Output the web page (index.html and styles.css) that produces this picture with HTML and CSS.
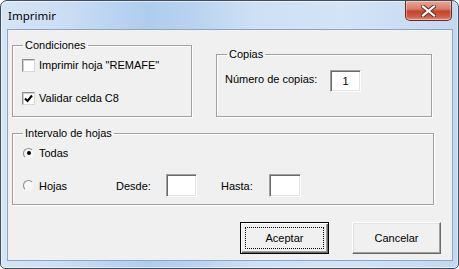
FILE: index.html
```html
<!DOCTYPE html>
<html lang="es">
<head>
<meta charset="utf-8">
<title>Imprimir</title>
<link rel="stylesheet" href="styles.css">
</head>
<body>
<div class="window">
  <div class="titlebar">
    <span class="title">Imprimir</span>
    <span class="close" aria-label="Cerrar">
      <svg width="15" height="12" viewBox="0 0 15 12">
        <path d="M2 1.5 L13 10.5 M13 1.5 L2 10.5" stroke="#5a2a24" stroke-width="4" stroke-linecap="square"/>
        <path d="M2 1.5 L13 10.5 M13 1.5 L2 10.5" stroke="#ffffff" stroke-width="2.2" stroke-linecap="square"/>
      </svg>
    </span>
  </div>
  <div class="client">
    <div class="top-row">
      <fieldset class="group cond">
        <legend>Condiciones</legend>
        <label class="check first"><span class="box"></span>Imprimir hoja "REMAFE"</label>
        <label class="check second"><span class="box"><svg width="9" height="9" viewBox="0 0 9 9"><path d="M1 4.5 L3.5 7 L8 1.5" fill="none" stroke="#000" stroke-width="2"/></svg></span>Validar celda C8</label>
      </fieldset>
      <fieldset class="group copias">
        <legend>Copias</legend>
        <div class="copies-row">
          <span class="copies-label">Número de copias:</span>
          <span class="textbox num">1</span>
        </div>
      </fieldset>
    </div>
    <fieldset class="group intervalo">
      <legend>Intervalo de hojas</legend>
      <label class="radio first"><span class="dot checked"></span>Todas</label>
      <div class="range-row">
        <label class="radio hojas"><span class="dot"></span>Hojas</label>
        <span class="range-label desde">Desde:</span>
        <span class="textbox from"></span>
        <span class="range-label hasta">Hasta:</span>
        <span class="textbox to"></span>
      </div>
    </fieldset>
    <div class="buttons">
      <span class="btn default"><span class="focus">Aceptar</span></span>
      <span class="btn">Cancelar</span>
    </div>
  </div>
</div>
</body>
</html>
```

FILE: styles.css
```css
html, body {
  margin: 0;
  padding: 0;
  background: #ffffff;
}
body {
  width: 459px;
  height: 269px;
  overflow: hidden;
  font-family: "Liberation Sans", Arial, sans-serif;
  font-size: 11px;
  color: #000;
}
.window {
  box-sizing: border-box;
  width: 459px;
  height: 269px;
  border: 1px solid #3e4d60;
  border-radius: 7px 7px 5px 5px;
  background:
    linear-gradient(90deg, #d6e5f5 0%, #c9ddf3 15%, #aecdee 32%, #b8d3ef 42%, #cde0f4 55%, #d3e4f6 75%, #c2d8f0 100%);
  box-shadow: inset 0 0 0 1px rgba(255,255,255,0.55);
  display: flex;
  flex-direction: column;
}
.titlebar {
  height: 28px;
  display: flex;
  align-items: flex-start;
  justify-content: space-between;
}
.title {
  font-family: "Noto Sans", "Open Sans", sans-serif;
  font-size: 11.5px;
  line-height: 16px;
  padding: 7px 0 0 7px;
  color: #000;
}
.close {
  width: 47px;
  height: 20px;
  margin-right: 6px;
  box-sizing: border-box;
  border: 1px solid #6e2a22;
  border-top: none;
  border-radius: 0 0 5px 5px;
  background: linear-gradient(180deg, #e7a896 0%, #d7816c 40%, #c4432d 55%, #cf6148 85%, #e59a80 100%);
  box-shadow: inset 0 0 0 1px rgba(255,255,255,0.35);
  display: flex;
  align-items: center;
  justify-content: center;
}
.client {
  flex: 1;
  margin: 0 5px 7px 6px;
  border: 1px solid #8ea4bf;
  background: #f0f0f0;
  display: flex;
  flex-direction: column;
  font-family: "Liberation Sans", Arial, sans-serif;
  font-size: 11px;
}
.top-row {
  display: flex;
  align-items: flex-end;
  margin-top: 8px;
  margin-left: 4px;
  gap: 24px;
}
.group {
  margin: 0;
  padding: 0;
  border: 1px solid #a0a0a0;
  box-shadow: 1px 1px 0 #ffffff, inset 1px 1px 0 #ffffff;
  box-sizing: border-box;
  min-width: 0;
}
.group legend {
  margin-left: 10px;
  padding: 0 2px;
  line-height: 14px;
  height: 14px;
}
.cond {
  width: 180px;
  height: 79px;
}
.copias {
  width: 216px;
  height: 70px;
}
.check {
  display: flex;
  align-items: center;
  height: 16px;
  margin-left: 9px;
}
.check.first { margin-top: 5px; }
.check.second { margin-top: 17px; }
.box {
  width: 11px;
  height: 11px;
  border: 1px solid #8f8f8f;
  border-right-color: #d8d8d8;
  border-bottom-color: #d8d8d8;
  background: #ffffff;
  margin-right: 4px;
  display: flex;
  align-items: center;
  justify-content: center;
  box-shadow: inset 1px 1px 0 #cfcfcf;
}
.copies-row {
  display: flex;
  align-items: flex-start;
  padding: 9px 0 0 8px;
}
.copies-label {
  width: 105px;
  margin-top: 2px;
  line-height: 14px;
}
.textbox {
  box-sizing: border-box;
  background: #ffffff;
  border: 1px solid #a0a0a0;
  border-right-color: #ffffff;
  border-bottom-color: #ffffff;
  box-shadow: inset 1px 1px 0 #696969, inset -1px -1px 0 #e3e3e3;
  display: flex;
  align-items: center;
  justify-content: center;
}
.num {
  width: 31px;
  height: 22px;
}
.intervalo {
  width: 422px;
  height: 79px;
  margin: 9px 0 0 4px;
}
.radio {
  display: flex;
  align-items: center;
  height: 16px;
  margin-left: 10px;
}
.radio.first { margin-top: 5px; }
.dot {
  box-sizing: border-box;
  width: 11px;
  height: 11px;
  border-radius: 50%;
  border: 1px solid;
  border-color: #8c8c8c #f4f4f4 #f4f4f4 #8c8c8c;
  background: #f7f7f7;
  margin-right: 5px;
  display: flex;
  align-items: center;
  justify-content: center;
}
.dot.checked::after {
  content: "";
  width: 4px;
  height: 4px;
  border-radius: 50%;
  background: #000;
}
.range-row {
  display: flex;
  align-items: center;
  margin-top: 13px;
}
.hojas {
  width: 93px;
}
.range-label {
  line-height: 14px;
}
.desde { width: 50px; }
.from {
  width: 31px;
  height: 23px;
}
.hasta {
  width: 48px;
  margin-left: 24px;
}
.to {
  width: 32px;
  height: 23px;
}
.buttons {
  display: flex;
  margin: 17px 0 0 232px;
  gap: 23px;
}
.btn {
  box-sizing: border-box;
  width: 89px;
  height: 32px;
  background: #f0f0f0;
  border: 1px solid;
  border-color: #ffffff #696969 #696969 #ffffff;
  box-shadow: inset -1px -1px 0 #a0a0a0, inset 1px 1px 0 #e3e3e3;
  display: flex;
  align-items: center;
  justify-content: center;
}
.btn.default {
  border: 1px solid #000;
  box-shadow: inset 1px 1px 0 #ffffff, inset -1px -1px 0 #696969, inset -2px -2px 0 #a0a0a0;
  padding: 4px;
}
.focus {
  flex: 1;
  align-self: stretch;
  border: 1px dotted #000;
  display: flex;
  align-items: center;
  justify-content: center;
}
```
